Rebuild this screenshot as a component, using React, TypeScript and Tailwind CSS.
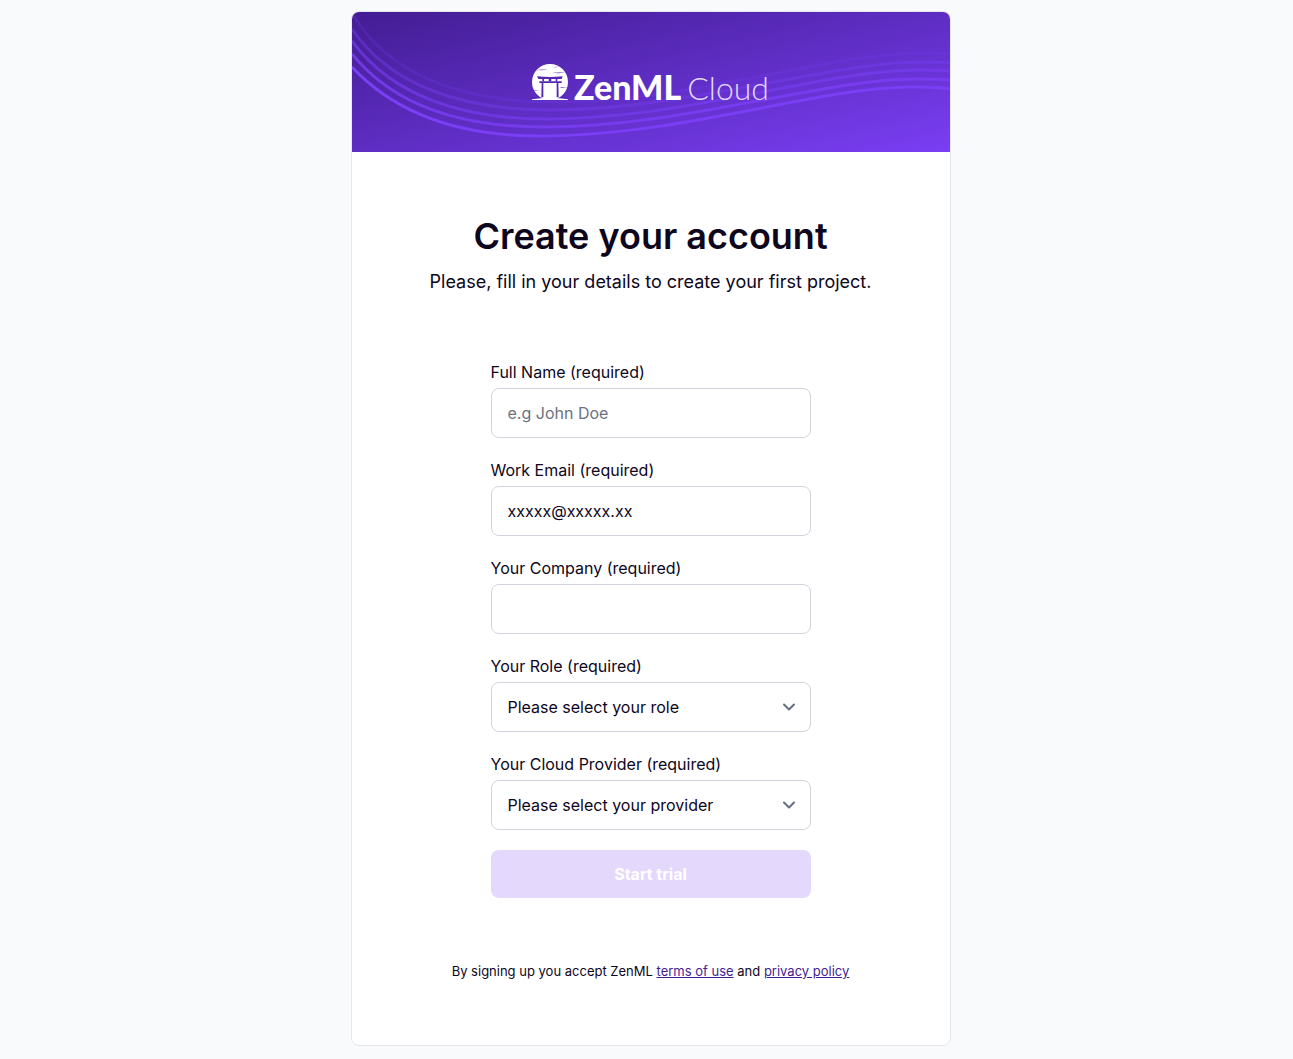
import { useId, useState } from "react";
import type { ReactNode } from "react";
import { ChevronDown } from "lucide-react";

const waves = [
  { d: "M0 1C35 62 110 90 200 90C335 90 480 41 571 41C581 41 590 41 598 42", opacity: 0.2 },
  { d: "M0 17C38 73 110 98 197 98C334 98 478 50 569 50C580 50 590 50 598 51", opacity: 0.4 },
  { d: "M0 29C40 84 110 107 194 107C333 107 474 58 566 58C578 58 589 58 598 59", opacity: 0.6 },
  { d: "M0 42C42 94 110 115 191 115C332 115 470 67 563 67C576 67 588 67 598 68", opacity: 0.8 },
  { d: "M0 55C45 103 110 124 188 124C330 124 466 75 560 75C574 75 587 75 598 77", opacity: 1 },
];

const control =
  "h-[50px] w-full rounded-lg border border-[#d0d5dd] bg-white px-4 text-base text-[#0d061d] outline-none placeholder:text-[#6b7280] focus:border-[#7a3ef4]";

function Field({ label, children }: { label: string; children: (id: string) => ReactNode }) {
  const id = useId();
  return (
    <div className="flex flex-col gap-1">
      <label htmlFor={id} className="text-base">
        {label}
      </label>
      {children(id)}
    </div>
  );
}

function SelectField({ label, options }: { label: string; options: string[] }) {
  return (
    <Field label={label}>
      {(id) => (
        <div className="relative">
          <select id={id} className={`${control} appearance-none pr-10`}>
            {options.map((option) => (
              <option key={option}>{option}</option>
            ))}
          </select>
          <ChevronDown
            className="pointer-events-none absolute inset-y-0 right-3 my-auto size-5 text-[#667085]"
            strokeWidth={2.5}
          />
        </div>
      )}
    </Field>
  );
}

function ToriiMark() {
  return (
    <svg viewBox="0 0 108 108" className="size-9" aria-hidden="true">
      <circle cx="54" cy="54" r="54" fill="#fff" />
      <g fill="#5527b3">
        <path d="M15 37Q54 41 92 37L89 45H19Z" />
        <path d="M22 52H89V57H22Z" />
        <path d="M31 45h5v7h-5zM50 45h8v7h-8zM71 45h5v7h-5z" />
        <path d="M29 57H34V100H28ZM74 57H79L80 100H74Z" />
        <path d="M10 18L50 16L30 19ZM60 26L102 25L80 28ZM58 9L86 8L72 10ZM0 80L24 79L4 82ZM84 70L108 70L88 72ZM0 99L27 99L0 104ZM81 99L108 99L108 104Z" />
      </g>
      <path d="M0 106Q54 97 108 106V108H0Z" fill="#fff" />
    </svg>
  );
}

export default function App() {
  const [email, setEmail] = useState("xxxxx@xxxxx.xx");

  return (
    <main className="flex min-h-screen justify-center bg-[#f9fafb] py-[11px] pl-2 font-['Inter',sans-serif] text-[#0d061d]">
      <section className="w-full max-w-[600px] self-start overflow-hidden rounded-lg border border-[#e5e7eb] bg-white">
        <header className="relative flex h-[140px] items-center justify-center bg-linear-to-br from-[#431d93] to-[#7a3ef4]">
          <svg
            viewBox="0 0 598 140"
            preserveAspectRatio="none"
            className="absolute inset-0 size-full"
            fill="none"
            stroke="#7a3ef4"
            strokeWidth="3"
            aria-hidden="true"
          >
            {waves.map((wave) => (
              <path key={wave.d} d={wave.d} opacity={wave.opacity} />
            ))}
          </svg>
          <div className="relative flex items-baseline gap-1.5 font-['Lato',sans-serif] leading-6 text-white">
            <ToriiMark />
            <span className="text-[34px] leading-6 font-black">ZenML</span>
            <span className="text-[32px] leading-6 font-light text-[#e4d8fd]">Cloud</span>
          </div>
        </header>

        <div className="flex flex-col items-center gap-16 px-4 py-16">
          <div className="flex flex-col gap-3 text-center">
            <h1 className="text-4xl font-semibold">Create your account</h1>
            <p className="text-lg">Please, fill in your details to create your first project.</p>
          </div>

          <form className="flex w-full max-w-[320px] flex-col gap-5" onSubmit={(e) => e.preventDefault()}>
            <Field label="Full Name (required)">
              {(id) => <input id={id} type="text" placeholder="e.g John Doe" className={control} />}
            </Field>
            <Field label="Work Email (required)">
              {(id) => (
                <input
                  id={id}
                  type="email"
                  value={email}
                  onChange={(e) => setEmail(e.target.value)}
                  className={control}
                />
              )}
            </Field>
            <Field label="Your Company (required)">
              {(id) => <input id={id} type="text" className={control} />}
            </Field>
            <SelectField
              label="Your Role (required)"
              options={["Please select your role", "Data Scientist", "ML Engineer"]}
            />
            <SelectField
              label="Your Cloud Provider (required)"
              options={["Please select your provider", "AWS", "GCP", "Azure"]}
            />
            <button type="submit" disabled className="h-12 rounded-lg bg-[#e4d8fd] text-base font-bold text-white">
              Start trial
            </button>
          </form>

          <p className="text-[13px] leading-[19px]">
            By signing up you accept ZenML{" "}
            <a href="#terms" className="text-[#431d93] underline">
              terms of use
            </a>{" "}
            and{" "}
            <a href="#privacy" className="text-[#431d93] underline">
              privacy policy
            </a>
          </p>
        </div>
      </section>
    </main>
  );
}
